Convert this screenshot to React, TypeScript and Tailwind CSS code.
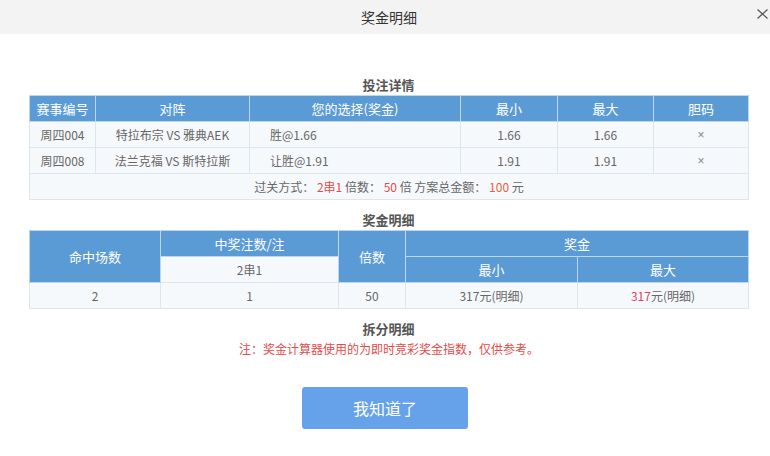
import React from "react"

const font = { fontFamily: '"Noto Sans CJK SC", "Liberation Sans", sans-serif' }

const th = "h-[26px] border border-[#bcd6ee] bg-[#5b9bd5] text-center text-[13px] font-normal text-white"
const td = "h-[26px] border border-[#dfe5ec] bg-[#f6f9fc] text-center text-[12px] text-[#666]"

function SectionTitle({ children, className = "" }: { children: React.ReactNode; className?: string }) {
  return (
    <div className={`h-[21px] text-center text-[13px] font-bold leading-[21px] text-[#555] ${className}`}>{children}</div>
  )
}

function Cross() {
  return <span className="text-[12px] text-[#888]" style={{ fontFamily: '"Liberation Sans", sans-serif' }}>×</span>
}

export default function App() {
  return (
    <div className="h-[456px] w-[770px] overflow-hidden bg-white" style={font}>
      {/* Header */}
      <header className="relative flex h-[34px] items-center justify-center bg-[#f3f3f3] pl-[8px]">
        <span className="text-[14px] text-[#333]">奖金明细</span>
        <svg className="absolute right-[2px] top-[9px]" width="11" height="10" viewBox="0 0 11 10">
          <path d="M0.5 0.5 L10.5 9.5 M10.5 0.5 L0.5 9.5" stroke="#555" strokeWidth="1.2" fill="none" />
        </svg>
      </header>

      <main className="ml-[29px] w-[719px]">
        <SectionTitle className="mt-[40px]">投注详情</SectionTitle>
        <table className="w-full table-fixed border-collapse">
          <colgroup>
            <col className="w-[66px]" />
            <col className="w-[154px]" />
            <col className="w-[211px]" />
            <col className="w-[97px]" />
            <col className="w-[96px]" />
            <col className="w-[95px]" />
          </colgroup>
          <thead>
            <tr>
              <th className={th}>赛事编号</th>
              <th className={th}>对阵</th>
              <th className={th}>您的选择(奖金)</th>
              <th className={th}>最小</th>
              <th className={th}>最大</th>
              <th className={th}>胆码</th>
            </tr>
          </thead>
          <tbody>
            <tr>
              <td className={td}>周四004</td>
              <td className={td}>特拉布宗 VS 雅典AEK</td>
              <td className={`${td} !text-left pl-[20px]`}>胜@1.66</td>
              <td className={td}>1.66</td>
              <td className={td}>1.66</td>
              <td className={td}><Cross /></td>
            </tr>
            <tr>
              <td className={td}>周四008</td>
              <td className={td}>法兰克福 VS 斯特拉斯</td>
              <td className={`${td} !text-left pl-[20px]`}>让胜@1.91</td>
              <td className={td}>1.91</td>
              <td className={td}>1.91</td>
              <td className={td}><Cross /></td>
            </tr>
            <tr>
              <td className={td} colSpan={6}>
                过关方式： <span className="text-[#e64b4b]">2串1</span> 倍数：{" "}
                <span className="text-[#e64b4b]">50</span> 倍 方案总金额：{" "}
                <span className="text-[#e8613f]">100</span> 元
              </td>
            </tr>
          </tbody>
        </table>

        <SectionTitle className="mt-[10px] !h-[20px] !leading-[20px]">奖金明细</SectionTitle>
        <table className="w-full table-fixed border-collapse">
          <colgroup>
            <col className="w-[131px]" />
            <col className="w-[178px]" />
            <col className="w-[67px]" />
            <col className="w-[172px]" />
            <col className="w-[171px]" />
          </colgroup>
          <thead>
            <tr>
              <th className={th} rowSpan={2}>命中场数</th>
              <th className={th}>中奖注数/注</th>
              <th className={th} rowSpan={2}>倍数</th>
              <th className={th} colSpan={2}>奖金</th>
            </tr>
            <tr>
              <th className={`${td} font-normal`}>2串1</th>
              <th className={th}>最小</th>
              <th className={th}>最大</th>
            </tr>
          </thead>
          <tbody>
            <tr>
              <td className={td}>2</td>
              <td className={td}>1</td>
              <td className={td}>50</td>
              <td className={td}>317元(明细)</td>
              <td className={td}>
                <span className="text-[#e0425e]">317</span>元(明细)
              </td>
            </tr>
          </tbody>
        </table>

        <SectionTitle className="mt-[10px] !h-[20px] !leading-[20px]">拆分明细</SectionTitle>
      </main>

      <p className="h-[20px] pl-[8px] text-center text-[12px] leading-[20px] text-[#e64b4b]">
        注：奖金计算器使用的为即时竞彩奖金指数，仅供参考。
      </p>

      <div className="mt-[28px] flex justify-center">
        <button className="h-[42px] w-[166px] rounded-[3px] bg-[#65a2ea] text-[16px] text-white">我知道了</button>
      </div>
    </div>
  )
}
